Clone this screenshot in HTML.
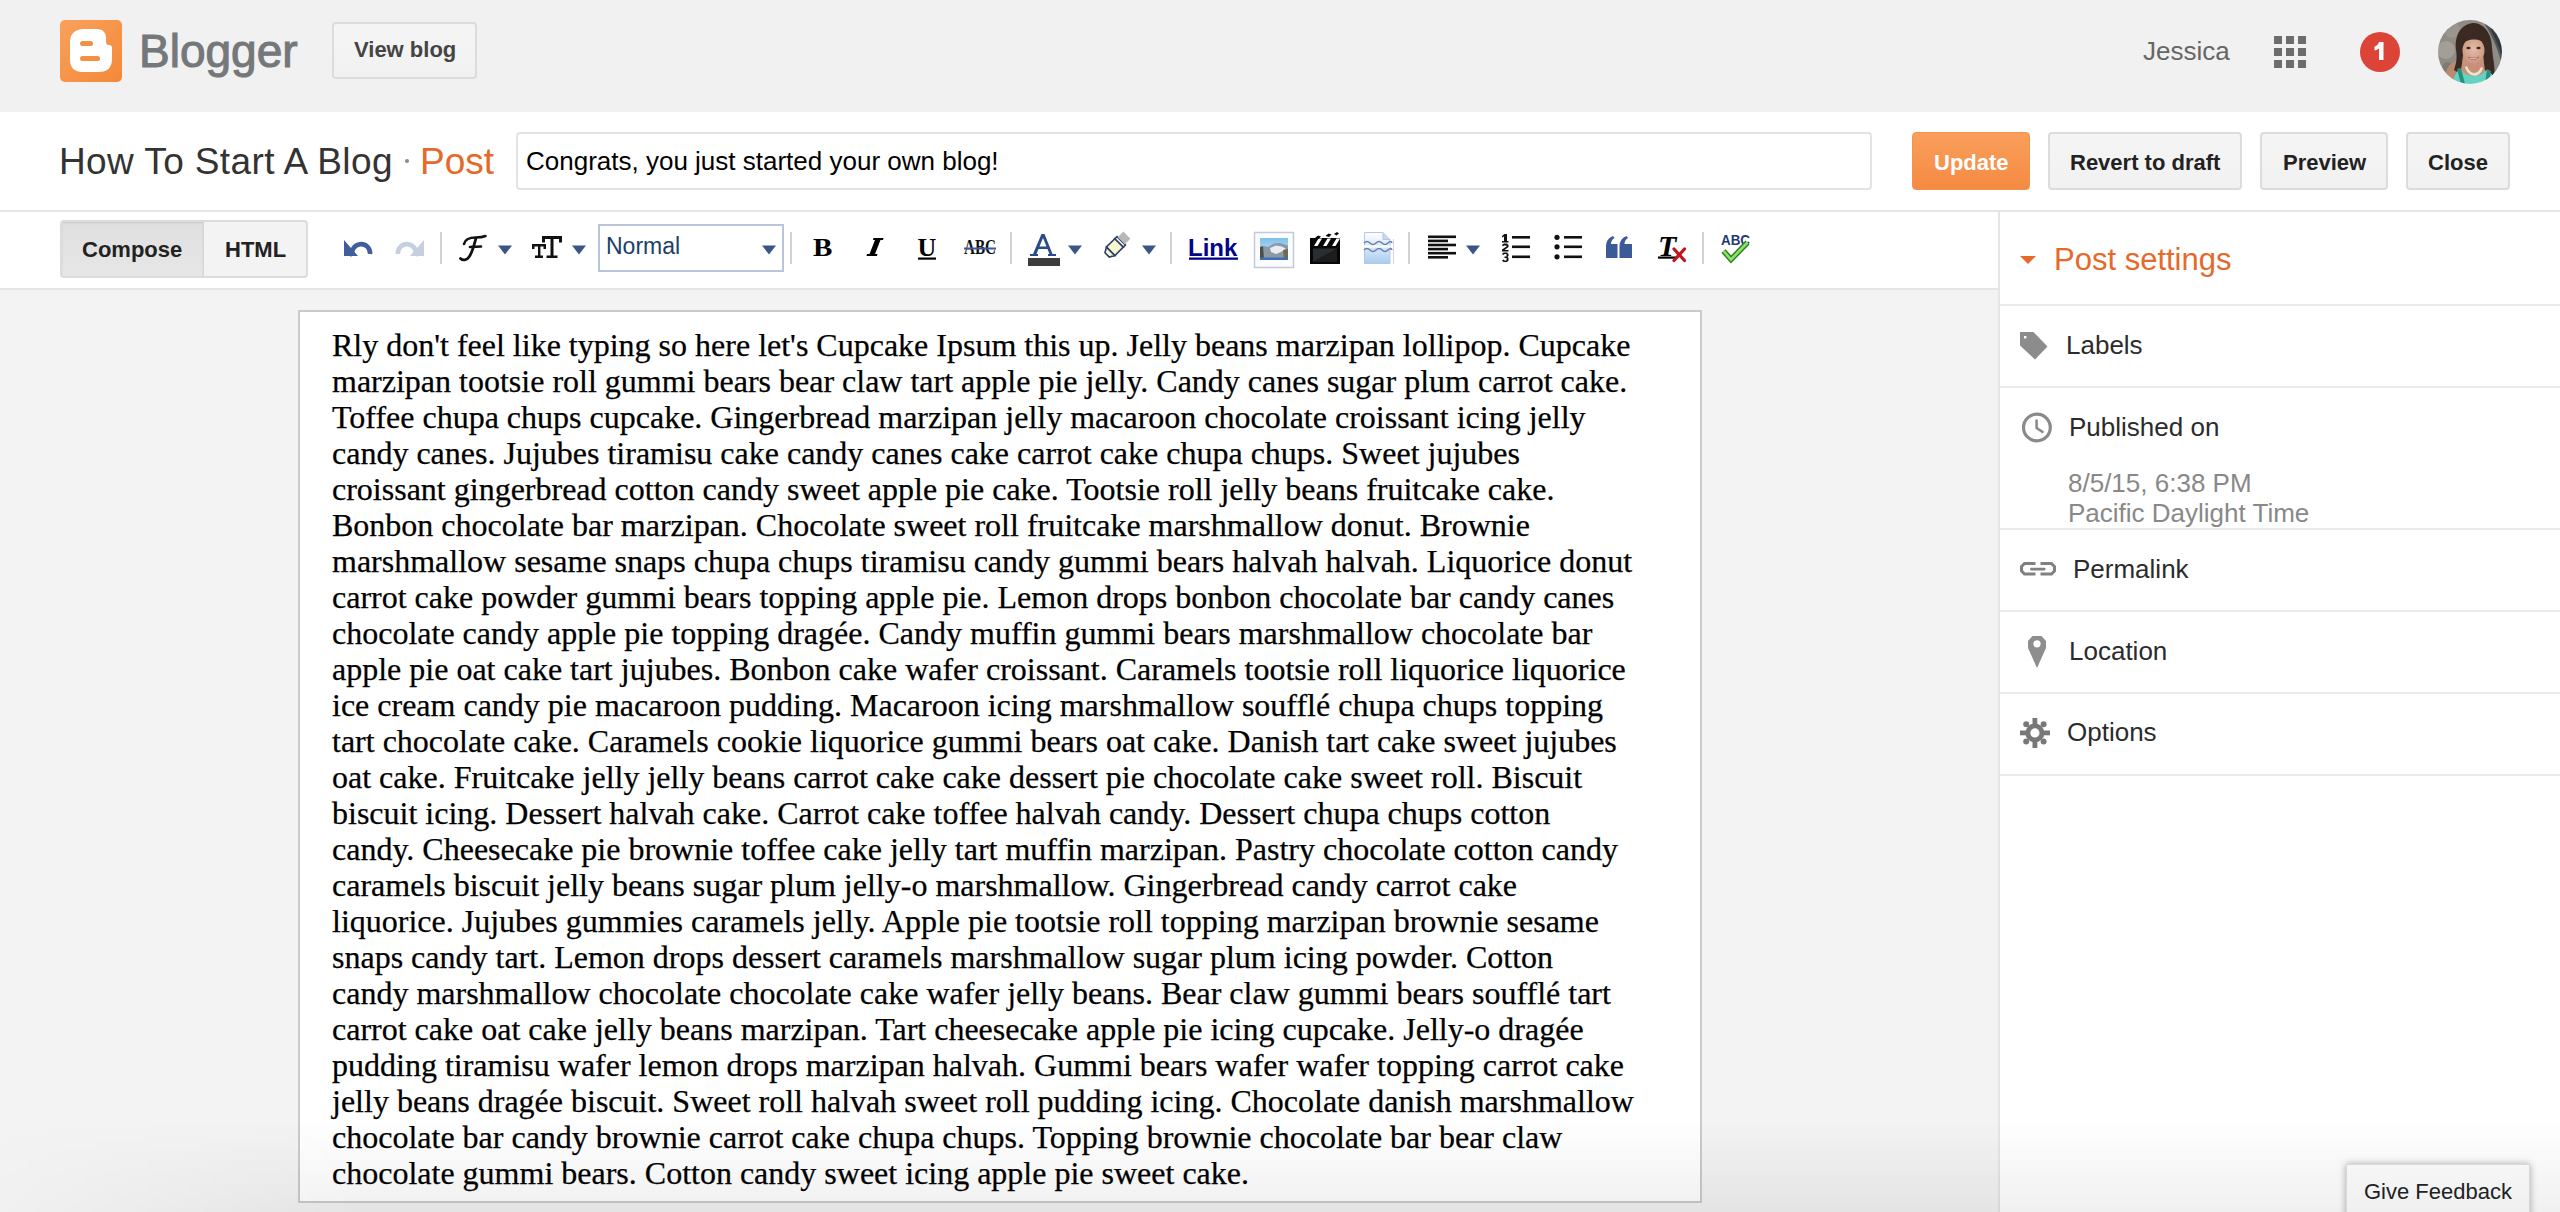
<!DOCTYPE html>
<html><head><meta charset="utf-8">
<style>
*{margin:0;padding:0;box-sizing:border-box}
html,body{width:2560px;height:1212px;overflow:hidden;background:#fff;font-family:"Liberation Sans",sans-serif;position:relative}
.a{position:absolute}
.t{position:absolute;white-space:nowrap;line-height:1}
#hdr{left:0;top:0;width:2560px;height:112px;background:#f1f1f1}
.btn{position:absolute;border:2px solid #dcdcdc;border-radius:4px;background:linear-gradient(#f5f5f5,#f1f1f1)}
.bt{position:absolute;white-space:nowrap;line-height:1;font-weight:bold;font-size:22px;color:#222}
.sep{position:absolute;top:232px;width:2px;height:32px;background:#d4d4d4}
.arr{position:absolute;top:246px;width:0;height:0;border-left:7px solid transparent;border-right:7px solid transparent;border-top:9px solid #3b5584}
.hr{position:absolute;left:2000px;width:560px;height:2px;background:#ebebeb}
.side{position:absolute;white-space:nowrap;line-height:1;font-size:26px;color:#2b2b2b}
#body{position:absolute;left:332px;top:327px;font-family:"Liberation Serif",serif;font-size:32px;line-height:36px;color:#000;white-space:nowrap;-webkit-text-stroke:0.25px #000}
</style></head><body>
<!-- header -->
<div id="hdr" class="a"></div>
<div class="a" style="left:60px;top:20px;width:62px;height:62px;border-radius:5px;background:linear-gradient(135deg,#f9a15c,#f48839)"></div>
<svg class="a" style="left:60px;top:20px" width="62" height="62" viewBox="0 0 62 62">
 <path d="M24 9 H37 C43 9 46 13 46 18 V22 C46 24 47 25 49 25 C51 25 52 26 52 28 V39 C52 48 47 52 39 52 H22 C14 52 10 47 10 40 V22 C10 14 15 9 24 9 Z" fill="#fff"/>
 <rect x="20" y="21" width="13" height="5" rx="2.5" fill="#f58f42"/>
 <rect x="20" y="36" width="20" height="5" rx="2.5" fill="#f58f42"/>
</svg>
<div class="t" style="left:139px;top:28px;font-size:46px;color:#75787b;-webkit-text-stroke:1.1px #75787b">Blogger</div>
<div class="btn" style="left:332px;top:22px;width:145px;height:57px"></div>
<div class="bt" style="left:354px;top:39px;color:#444">View blog</div>
<div class="t" style="left:2143px;top:38px;font-size:26px;color:#666">Jessica</div>
<svg class="a" style="left:2274px;top:36px" width="32" height="32">
 <g fill="#6d6d6d"><rect x="0" y="0" width="8" height="8"/><rect x="12" y="0" width="8" height="8"/><rect x="24" y="0" width="8" height="8"/><rect x="0" y="12" width="8" height="8"/><rect x="12" y="12" width="8" height="8"/><rect x="24" y="12" width="8" height="8"/><rect x="0" y="24" width="8" height="8"/><rect x="12" y="24" width="8" height="8"/><rect x="24" y="24" width="8" height="8"/></g>
</svg>
<div class="a" style="left:2360px;top:32px;width:40px;height:40px;border-radius:50%;background:#dc4437"></div>
<svg class="a" style="left:2360px;top:32px" width="40" height="40" viewBox="2360 32 40 40"><path d="M2379 42 H2383.5 V60 H2379 V48.5 C2377.8 49.5 2376.3 50.2 2374.5 50.6 V46.8 C2376.6 46.1 2378.2 44.6 2379 42Z" fill="#fff"/></svg>
<svg class="a" style="left:2438px;top:20px" width="64" height="64" viewBox="0 0 64 64">
 <defs><clipPath id="cc"><circle cx="32" cy="32" r="32"/></clipPath>
 <filter id="soft"><feGaussianBlur stdDeviation="0.7"/></filter><radialGradient id="face" cx="0.5" cy="0.45" r="0.6"><stop offset="0" stop-color="#e6bca8"/><stop offset="1" stop-color="#c8937c"/></radialGradient></defs>
 <g clip-path="url(#cc)"><g filter="url(#soft)">
  <rect x="-4" y="-4" width="72" height="72" fill="#8f8b85"/>
  <circle cx="8" cy="30" r="9" fill="#a39e96"/><circle cx="14" cy="10" r="8" fill="#9a958e"/><circle cx="10" cy="48" r="6" fill="#7f7a73"/>
  <path d="M44 0 H64 V44 C60 30 54 14 44 0Z" fill="#50555a"/>
  <path d="M50 4 L64 10 V36 C60 24 55 14 50 4Z" fill="#33383c"/>
  <path d="M6 60 C8 48 12 42 20 40 L24 64 H6Z" fill="#b98a70"/>
  <path d="M18 30 C16 12 26 3 36 3 C48 4 54 16 54 28 C55 40 58 50 56 60 L46 62 C46 50 46 42 45 34 L25 34 C25 42 24 48 22 54 L16 50 C19 42 19 36 18 30Z" fill="#3a2b24"/>
  <path d="M25 36 H45 L48 58 H22Z" fill="#c79079"/>
  <ellipse cx="35.5" cy="30.5" rx="11" ry="13" fill="url(#face)"/>
  <path d="M23.5 25 C25 14 44 12 47 24 C44 19 30 17 23.5 25Z" fill="#3a2b24"/>
  <g fill="#3d2c26"><ellipse cx="30.5" cy="28" rx="2.2" ry="1.2"/><ellipse cx="40.5" cy="28" rx="2.2" ry="1.2"/></g>
  <path d="M30 37 C33 40.5 38 40.5 41 37 C38 38.5 33 38.5 30 37Z" fill="#fff" stroke="#a45b55" stroke-width="0.8"/>
  <path d="M14 64 C16 56 19 51 22 48 C27 58 42 59 48 50 C53 52 57 57 58 64Z" fill="#62d3c2"/>
  <path d="M19 49 L23 64 H27 L23 48Z" fill="#2f8c7e"/><path d="M49 49 L47 64 H51 L53 51Z" fill="#2f8c7e"/>
  <path d="M27 47 C30 58 42 59 45 48 L43 47 C40 55 32 55 29 46Z" fill="#ebe4cf"/>
 </g></g>
</svg>

<!-- title row -->
<div class="t" style="left:59px;top:143px;font-size:37px;color:#333;letter-spacing:0.4px">How To Start A Blog</div>
<div class="a" style="left:405px;top:159px;width:4px;height:4px;border-radius:50%;background:#8a8a8a"></div>
<div class="t" style="left:420px;top:143px;font-size:37px;color:#e5692b">Post</div>
<div class="a" style="left:516px;top:132px;width:1356px;height:58px;border:2px solid #e3e3e3;border-radius:4px;background:#fff"></div>
<div class="t" style="left:526px;top:148px;font-size:26px;color:#000">Congrats, you just started your own blog!</div>
<div class="a" style="left:1912px;top:132px;width:118px;height:58px;border-radius:4px;background:linear-gradient(#f99f5b,#f58a42);border:1px solid #f2924e"></div>
<div class="bt" style="left:1934px;top:152px;color:#fff">Update</div>
<div class="btn" style="left:2048px;top:132px;width:194px;height:58px"></div>
<div class="bt" style="left:2070px;top:152px">Revert to draft</div>
<div class="btn" style="left:2260px;top:132px;width:128px;height:58px"></div>
<div class="bt" style="left:2283px;top:152px">Preview</div>
<div class="btn" style="left:2406px;top:132px;width:104px;height:58px"></div>
<div class="bt" style="left:2428px;top:152px">Close</div>
<div class="a" style="left:0;top:210px;width:2560px;height:2px;background:#e5e5e5"></div>

<!-- toolbar -->
<div class="a" style="left:0;top:288px;width:1998px;height:2px;background:#e5e5e5"></div>
<div class="a" style="left:0;top:290px;width:1998px;height:922px;background:#f3f3f3"></div>
<div class="a" style="left:1998px;top:212px;width:2px;height:1000px;background:#e5e5e5"></div>
<div class="a" style="left:60px;top:220px;width:248px;height:58px;border:2px solid #dcdcdc;border-radius:4px;background:#f3f3f3;overflow:hidden">
 <div class="a" style="left:0;top:0;width:142px;height:54px;background:linear-gradient(#e0e0e0,#e6e6e6);box-shadow:inset 0 1px 2px rgba(0,0,0,.1);border-right:1px solid #d6d6d6"></div>
</div>
<div class="bt" style="left:82px;top:239px">Compose</div>
<div class="bt" style="left:225px;top:239px">HTML</div>

<svg class="a" style="left:0;top:0" width="2560" height="300" viewBox="0 0 2560 300">
 <defs>
  <linearGradient id="sky" x1="0" y1="0" x2="0" y2="1"><stop offset="0" stop-color="#7fc0ea"/><stop offset="1" stop-color="#cfe9f7"/></linearGradient>
  <linearGradient id="brk" x1="0" y1="0" x2="0" y2="1"><stop offset="0" stop-color="#ffffff"/><stop offset="1" stop-color="#a9cdf0"/></linearGradient>
  <linearGradient id="clap" x1="0" y1="0" x2="1" y2="1"><stop offset="0" stop-color="#050505"/><stop offset="0.6" stop-color="#2a2f33"/><stop offset="1" stop-color="#0a0a0a"/></linearGradient>
 </defs>
 <!-- undo -->
 <g fill="#3f5e9b"><path d="M344 240 L344 256 L358 256 Z"/></g>
 <path d="M352.5 256 A 9 9 0 1 1 370 254" fill="none" stroke="#3f5e9b" stroke-width="4.6"/>
 <!-- redo -->
 <g fill="#c6cfde"><path d="M424 240 L424 256 L410 256 Z"/></g>
 <path d="M415.5 256 A 9 9 0 1 0 398 254" fill="none" stroke="#c6cfde" stroke-width="4.6"/>
 <!-- separators -->
 <g fill="#d2d2d2">
  <rect x="440" y="232" width="2" height="32"/><rect x="790" y="232" width="2" height="32"/><rect x="1010" y="232" width="2" height="32"/>
  <rect x="1170" y="232" width="2" height="32"/><rect x="1408" y="232" width="2" height="32"/><rect x="1702" y="232" width="2" height="32"/>
 </g>
 <!-- font F -->
 <g fill="none" stroke="#111" stroke-linecap="round">
  <path d="M464 244 C465 239 470 237.5 476 237.5 C480 237.5 483 237 485.5 236" stroke-width="2.6"/>
  <path d="M476 238 C474 246 472 253 469 257 C467 260 463 261 460.5 258.5" stroke-width="2.8"/>
  <path d="M470 247 L481 246.5" stroke-width="2.6"/>
 </g>
 <!-- Normal select -->
 <rect x="599" y="225" width="184" height="46" fill="#fff" stroke="#b9c5dc" stroke-width="2"/>
 <!-- arrows -->
 <g fill="#3b5588">
  <path d="M498 245.5 h14 l-7 9 z"/><path d="M572 245.5 h14 l-7 9 z"/><path d="M762 245.5 h14 l-7 9 z"/>
  <path d="M1068 245.5 h14 l-7 9 z"/><path d="M1142 245.5 h14 l-7 9 z"/><path d="M1466 245.5 h14 l-7 9 z"/>
 </g>
 <!-- TT -->
 <g fill="#111">
  <rect x="532" y="244" width="14" height="2.5"/><rect x="532" y="244" width="2.5" height="5"/><rect x="543.5" y="244" width="2.5" height="5"/>
  <rect x="538" y="244" width="2.4" height="14"/><rect x="535" y="255.5" width="8" height="2.5"/>
  <rect x="542" y="236" width="20" height="3"/><rect x="542" y="236" width="3" height="6.5"/><rect x="559" y="236" width="3" height="6.5"/>
  <rect x="550.5" y="236" width="3" height="22"/><rect x="546.5" y="255.5" width="11" height="2.5"/>
 </g>
 <!-- B I U ABC -->
 <text x="813" y="256" font-family="Liberation Serif" font-weight="bold" font-size="26" fill="#000" transform="translate(813 0) scale(1.12 1) translate(-813 0)">B</text>
 <g fill="#000">
  <path d="M873.5 238 H883.5 L883 240 H880.5 L875 254 H877.5 L877 256 H866.5 L867 254 H869.5 L875 240 H873 Z"/>
 </g>
 <text x="917.5" y="256" font-family="Liberation Serif" font-weight="bold" font-size="26" fill="#000">U</text>
 <rect x="918" y="257.5" width="18" height="2.2" fill="#000"/>
 <text x="964" y="254.5" font-family="Liberation Serif" font-weight="bold" font-size="20" fill="#111" transform="translate(964 0) scale(0.76 1) translate(-964 0)">ABC</text>
 <rect x="964" y="247.5" width="32" height="2" fill="#3d5b9a"/>
 <!-- A color -->
 <g fill="#2b4a8a">
  <path d="M1041.5 234 H1044.5 L1052.5 254 H1056 V256 H1048 V254 H1049.5 L1047.5 249 H1038.5 L1036.5 254 H1038 V256 H1030 V254 H1033 Z M1039.5 246.5 H1046.5 L1043 238 Z"/>
 </g>
 <rect x="1028" y="258" width="32" height="8" fill="#3c3c3c"/>
 <!-- highlighter -->
 <g transform="rotate(-45 1117 245)">
  <rect x="1108" y="239" width="12" height="12" fill="#f6f7cf" stroke="#2c3e66" stroke-width="1.6"/>
  <rect x="1120" y="239" width="3" height="12" fill="#fff" stroke="#2c3e66" stroke-width="1.6"/>
  <rect x="1123" y="240" width="8" height="10" fill="#b8b8b8"/>
  <path d="M1108 239 L1103 242 V248 L1108 251 Z" fill="#f6f7cf" stroke="#2c3e66" stroke-width="1.6"/>
 </g>
 <!-- Link -->
 <text x="1188" y="256" font-family="Liberation Sans" font-weight="bold" font-size="24" fill="#03058a">Link</text>
 <rect x="1189" y="257.5" width="49" height="2.3" fill="#03058a"/>
 <!-- image -->
 <rect x="1254.5" y="232.5" width="39" height="35" fill="#fbfcfe" stroke="#c3c9d9" stroke-width="1.5"/>
 <rect x="1260" y="238" width="28" height="22" fill="url(#sky)"/>
 <path d="M1260 248 L1264 246 L1268 247 L1274 243.5 L1280 243 L1288 245.5 V259 H1260 Z" fill="#8d98a3"/>
 <path d="M1270 248 L1276 245.5 L1282 246.5 L1286 249 L1281 252 L1276 254 L1271 252 Z" fill="#e6ecf2"/>
 <path d="M1260 247 L1263 246 L1264 259 H1260 Z" fill="#4a5048"/>
 <path d="M1283 250 L1288 249 V259 H1284 Z" fill="#6f6a55"/>
 <rect x="1260" y="257.5" width="28" height="2.5" fill="#3f6fb5"/>
 <!-- clapper -->
 <rect x="1310" y="246" width="30" height="18" fill="#070707"/>
 <rect x="1313" y="248.5" width="24" height="13" fill="#2a2e31"/>
 <path d="M1313 261.5 L1337 248.5 V261.5 Z" fill="#1a1c1e"/>
 <rect x="1310" y="238" width="30" height="8.5" fill="#080808"/>
 <g fill="#fff">
  <path d="M1314 246 L1318.5 238.5 H1322 L1317.5 246 Z"/><path d="M1323 246 L1327.5 238.5 H1331 L1326.5 246 Z"/><path d="M1332 246 L1336.5 238.5 H1340 L1335.5 246 Z"/>
 </g>
 <g fill="#080808">
  <path d="M1315 238 L1318 235.5 L1321 236.5 L1318.5 239 Z"/><path d="M1325.5 236 L1328.5 233.5 L1331.5 234.5 L1329 237 Z"/><path d="M1334 234 L1337 232 L1339 233.5 L1336.5 235.5 Z"/>
 </g>
 <!-- jump break -->
 <path d="M1364.5 232.5 H1383 L1390 239.5 V263.5 H1364.5 Z" fill="url(#brk)" stroke="#b5c8e0" stroke-width="1"/>
 <path d="M1383 232.5 V239.5 H1390" fill="#c9d6e6" stroke="#b5c8e0" stroke-width="1"/>
 <path d="M1364 243 q3 -3 6 0 t6 0 t6 0 t6 0 t4 0" fill="none" stroke="#6a80a8" stroke-width="1.6"/>
 <path d="M1364 250 q3 -3 6 0 t6 0 t6 0 t6 0 t4 0" fill="none" stroke="#6a80a8" stroke-width="1.6"/>
 <rect x="1364" y="245.5" width="26" height="2" fill="#fff"/>
 <rect x="1393" y="239" width="1" height="25" fill="#cfd6e2"/>
 <!-- align -->
 <g fill="#111">
  <rect x="1428" y="235.5" width="28" height="2.6"/><rect x="1428" y="239.6" width="20" height="2.6"/><rect x="1428" y="243.7" width="28" height="2.6"/>
  <rect x="1428" y="247.8" width="20" height="2.6"/><rect x="1428" y="251.9" width="28" height="2.6"/><rect x="1428" y="256" width="20" height="2.6"/>
 </g>
 <!-- numbered list -->
 <g fill="#111">
  <rect x="1512" y="236" width="18" height="2.6"/><rect x="1512" y="245.5" width="18" height="2.6"/><rect x="1512" y="255.5" width="18" height="2.6"/>
  <path d="M1504.5 234 H1507 V241 H1508.5 V242.5 H1502 V241 H1504 V236.5 L1502 237.5 V236 Z"/>
  <path d="M1502 245 L1504 243.5 H1507 L1508.5 245 V247 L1504.5 250 H1508.5 V251.5 H1502 V249.5 L1506.5 246.5 V245.5 H1504 L1503 246.5 Z"/>
  <path d="M1502 254 L1503.5 252.5 H1507 L1508.5 254 V256 L1507.5 257 L1508.5 258 V260.5 L1507 262 H1503.5 L1502 260.5 L1503.5 259.5 L1504.5 260.5 H1506.5 V258 H1504.5 V256.5 H1506.5 V254 H1504.5 L1503.5 255 Z"/>
 </g>
 <!-- bullet list -->
 <g fill="#111">
  <rect x="1564" y="236" width="18" height="2.6"/><rect x="1564" y="245.5" width="18" height="2.6"/><rect x="1564" y="255.5" width="18" height="2.6"/>
  <circle cx="1557" cy="237.3" r="2.6"/><circle cx="1557" cy="246.8" r="2.6"/><circle cx="1557" cy="256.8" r="2.6"/>
 </g>
 <!-- quote -->
 <g fill="#3d5a98">
  <path d="M1606 258 V246.5 C1606 241 1609 237.5 1613 236 L1614.5 238 C1612 239.5 1611 241.5 1611 244 H1617.5 V258 Z"/>
  <path d="M1619.5 258 V246.5 C1619.5 241 1622.5 237.5 1626.5 236 L1628 238 C1625.5 239.5 1624.5 241.5 1624.5 244 H1632 V258 Z"/>
 </g>
 <!-- Tx -->
 <text x="1658" y="256" font-family="Liberation Serif" font-style="italic" font-weight="bold" font-size="30" fill="#000">T</text>
 <rect x="1658" y="256.5" width="20" height="2.2" fill="#000"/>
 <g stroke="#c0151b" stroke-width="3.2" stroke-linecap="round">
  <path d="M1674 249 L1684.5 260.5"/><path d="M1684.5 249 L1674 260.5"/>
 </g>
 <!-- spellcheck -->
 <text x="1721" y="245" font-family="Liberation Sans" font-weight="bold" font-size="14" fill="#1f3a73" textLength="29" lengthAdjust="spacingAndGlyphs">ABC</text>
 <path d="M1723.5 251 L1731 259.5 L1747.5 242.5" fill="none" stroke="#2f7a22" stroke-width="5.5" stroke-linejoin="miter"/>
 <path d="M1723.5 251 L1731 259.5 L1747.5 242.5" fill="none" stroke="#8ae465" stroke-width="2.6"/>
</svg>
<div class="t" style="left:606px;top:235px;font-size:23px;color:#1c3e6b">Normal</div>

<!-- editor box -->
<div class="a" style="left:298px;top:310px;width:1404px;height:893px;border:2px solid #cacaca;background:#fff"></div>
<div id="body">Rly don't feel like typing so here let's Cupcake Ipsum this up. Jelly beans marzipan lollipop. Cupcake<br>marzipan tootsie roll gummi bears bear claw tart apple pie jelly. Candy canes sugar plum carrot cake.<br>Toffee chupa chups cupcake. Gingerbread marzipan jelly macaroon chocolate croissant icing jelly<br>candy canes. Jujubes tiramisu cake candy canes cake carrot cake chupa chups. Sweet jujubes<br>croissant gingerbread cotton candy sweet apple pie cake. Tootsie roll jelly beans fruitcake cake.<br>Bonbon chocolate bar marzipan. Chocolate sweet roll fruitcake marshmallow donut. Brownie<br>marshmallow sesame snaps chupa chups tiramisu candy gummi bears halvah halvah. Liquorice donut<br>carrot cake powder gummi bears topping apple pie. Lemon drops bonbon chocolate bar candy canes<br>chocolate candy apple pie topping dragée. Candy muffin gummi bears marshmallow chocolate bar<br>apple pie oat cake tart jujubes. Bonbon cake wafer croissant. Caramels tootsie roll liquorice liquorice<br>ice cream candy pie macaroon pudding. Macaroon icing marshmallow soufflé chupa chups topping<br>tart chocolate cake. Caramels cookie liquorice gummi bears oat cake. Danish tart cake sweet jujubes<br>oat cake. Fruitcake jelly jelly beans carrot cake cake dessert pie chocolate cake sweet roll. Biscuit<br>biscuit icing. Dessert halvah cake. Carrot cake toffee halvah candy. Dessert chupa chups cotton<br>candy. Cheesecake pie brownie toffee cake jelly tart muffin marzipan. Pastry chocolate cotton candy<br>caramels biscuit jelly beans sugar plum jelly-o marshmallow. Gingerbread candy carrot cake<br>liquorice. Jujubes gummies caramels jelly. Apple pie tootsie roll topping marzipan brownie sesame<br>snaps candy tart. Lemon drops dessert caramels marshmallow sugar plum icing powder. Cotton<br>candy marshmallow chocolate chocolate cake wafer jelly beans. Bear claw gummi bears soufflé tart<br>carrot cake oat cake jelly beans marzipan. Tart cheesecake apple pie icing cupcake. Jelly-o dragée<br>pudding tiramisu wafer lemon drops marzipan halvah. Gummi bears wafer wafer topping carrot cake<br>jelly beans dragée biscuit. Sweet roll halvah sweet roll pudding icing. Chocolate danish marshmallow<br>chocolate bar candy brownie carrot cake chupa chups. Topping brownie chocolate bar bear claw<br>chocolate gummi bears. Cotton candy sweet icing apple pie sweet cake.</div>

<!-- sidebar -->
<div class="a" style="left:2020px;top:256px;width:0;height:0;border-left:8px solid transparent;border-right:8px solid transparent;border-top:8px solid #e5692b"></div>
<div class="t" style="left:2054px;top:244px;font-size:31px;color:#e5692b">Post settings</div>
<div class="hr" style="top:304px"></div>
<div class="side" style="left:2066px;top:332px">Labels</div>
<div class="hr" style="top:386px"></div>
<div class="side" style="left:2069px;top:414px">Published on</div>
<div class="side" style="left:2068px;top:470px;color:#888">8/5/15, 6:38 PM</div>
<div class="side" style="left:2068px;top:500px;color:#888">Pacific Daylight Time</div>
<div class="hr" style="top:528px"></div>
<div class="side" style="left:2073px;top:556px">Permalink</div>
<div class="hr" style="top:610px"></div>
<div class="side" style="left:2069px;top:638px">Location</div>
<div class="hr" style="top:692px"></div>
<div class="side" style="left:2067px;top:719px">Options</div>
<div class="hr" style="top:774px"></div>

<svg class="a" style="left:2000px;top:320px" width="80" height="440" viewBox="2000 320 80 440">
 <!-- tag -->
 <path d="M2020 332 H2033.5 L2047.5 346.5 L2035 359.5 L2020 345.5 Z" fill="#8c8c8c"/>
 <rect x="2024" y="336" width="2.4" height="2.4" fill="#fff"/>
 <!-- clock -->
 <circle cx="2036.9" cy="427.5" r="13.4" fill="none" stroke="#8a8a8a" stroke-width="3.2"/>
 <path d="M2036.6 420.5 V428 L2042.5 431.8" fill="none" stroke="#8a8a8a" stroke-width="2.6" stroke-linecap="round" stroke-linejoin="round"/>
 <!-- link -->
 <g fill="none" stroke="#808080" stroke-width="3">
  <path d="M2035.5 563.5 H2024.5 L2021.5 566.5 V571 L2024.5 574 H2035.5"/>
  <path d="M2040.5 563.5 H2051.5 L2054.5 566.5 V571 L2051.5 574 H2040.5"/>
 </g>
 <rect x="2030" y="567.8" width="15.6" height="2.6" rx="1.3" fill="#808080"/>
 <!-- pin -->
 <path d="M2032.5 636 H2041.5 L2046 641 V648 L2037 668 L2028 648 V641 Z" fill="#8e8e8e"/>
 <path d="M2032.5 636 Q2028 638 2028 643 M2041.5 636 Q2046 638 2046 643" fill="none" stroke="#fff" stroke-width="0"/>
 <circle cx="2037" cy="643.8" r="3.6" fill="#fff"/>
 <!-- gear -->
 <g fill="#787878">
  <rect x="2032.5" y="718" width="4.8" height="30"/>
  <rect x="2020" y="730.5" width="30" height="4.8"/>
  <circle cx="2026.2" cy="724.2" r="3"/><circle cx="2043.6" cy="724.2" r="3"/>
  <circle cx="2026.2" cy="741.6" r="3"/><circle cx="2043.6" cy="741.6" r="3"/>
  <circle cx="2034.9" cy="732.9" r="9.5"/>
 </g>
 <circle cx="2034.9" cy="732.9" r="4.6" fill="#fff"/>
</svg>
<!-- bottom shade -->
<div class="a" style="left:0;top:1120px;width:2560px;height:92px;background:linear-gradient(rgba(0,0,0,0),rgba(0,0,0,.058));-webkit-mask-image:linear-gradient(to right,rgba(0,0,0,.15) 0,#000 360px)"></div>
<!-- feedback -->
<div class="a" style="left:2346px;top:1164px;width:184px;height:60px;background:linear-gradient(#f6f6f6,#eeeeee);border:1px solid #d8d8d8;box-shadow:0 0 7px rgba(0,0,0,.32)"></div>
<div class="t" style="left:2364px;top:1181px;font-size:22px;color:#222">Give Feedback</div>
</body></html>
